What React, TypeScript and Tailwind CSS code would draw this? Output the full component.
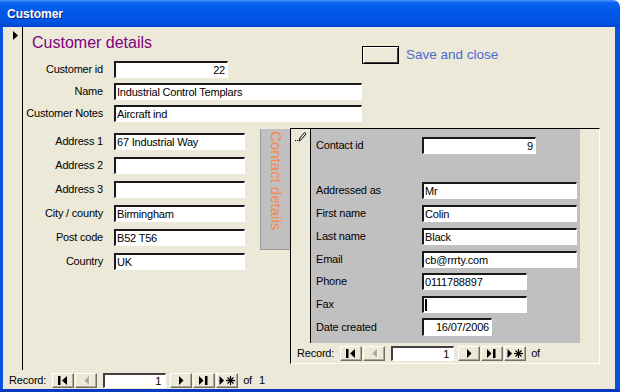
import React from 'react';

type FieldProps = {
  size: string;
  value?: string;
  right?: boolean;
  caret?: boolean;
};

const Field = ({ size, value, right, caret }: FieldProps) => (
  <div
    className={`${size} shrink-0 flex items-center overflow-hidden whitespace-nowrap bg-white border-t-2 border-l-2 border-b border-r border-t-[#1a1a1a] border-l-[#1a1a1a] border-b-white border-r-white text-[11px] leading-none tracking-[-0.2px] text-black ${right ? 'justify-end pr-[2px]' : 'pl-[1px]'}`}
  >
    {caret && <span className="w-[2px] h-[12px] bg-black" />}
    {value}
  </div>
);

const MainRow = ({ label, children }: { label: string; children: React.ReactNode }) => (
  <div className="flex items-center h-[17px]">
    <span className="w-[91px] shrink-0 pr-[11px] text-right text-[11px] tracking-[-0.2px] whitespace-nowrap">{label}</span>
    {children}
  </div>
);

const SubRow = ({ label, children, className = '' }: { label: string; children: React.ReactNode; className?: string }) => (
  <div className={`flex items-center ${className}`}>
    <span className="w-[106px] shrink-0 text-[11px] tracking-[-0.2px] whitespace-nowrap">{label}</span>
    {children}
  </div>
);

const NavButton = ({ children }: { children: React.ReactNode }) => (
  <div className="w-[22px] h-[15px] shrink-0 bg-[#ece9d8] border border-t-white border-l-white border-b-[#716f64] border-r-[#716f64] shadow-[inset_-1px_-1px_0_#aca899]">
    <svg width="20" height="13" viewBox="0 0 20 13" className="block">
      {children}
    </svg>
  </div>
);

const RecordNav = ({ total }: { total?: string }) => (
  <div className="flex items-center text-[11px] tracking-[-0.2px] text-black">
    <span>Record:</span>
    <div className="flex gap-[1px] ml-[6px]">
      <NavButton>
        <rect x="5" y="2" width="2.5" height="9" fill="#000" />
        <polygon points="14,2 14,11 9,6.5" fill="#000" />
      </NavButton>
      <NavButton>
        <polygon points="14,3 14,12 9.5,7.5" fill="#fff" />
        <polygon points="13,2 13,11 8.5,6.5" fill="#aca899" />
      </NavButton>
    </div>
    <div className="ml-[6px] w-[63px] h-[15px] bg-white border-t-2 border-l-2 border-b border-r border-t-[#404040] border-l-[#404040] border-b-white border-r-white flex items-center justify-end pr-[4px] leading-none">
      1
    </div>
    <div className="flex gap-[1px] ml-[4px]">
      <NavButton>
        <polygon points="8,2 8,11 12.5,6.5" fill="#000" />
      </NavButton>
      <NavButton>
        <polygon points="5,2 5,11 9.5,6.5" fill="#000" />
        <rect x="11" y="2" width="2.5" height="9" fill="#000" />
      </NavButton>
      <NavButton>
        <polygon points="2.5,2 2.5,11 7,6.5" fill="#000" />
        <g stroke="#000" strokeWidth="1.2">
          <line x1="13.5" y1="2" x2="13.5" y2="11" />
          <line x1="9" y1="6.5" x2="18" y2="6.5" />
          <line x1="10.5" y1="3.5" x2="16.5" y2="9.5" />
          <line x1="16.5" y1="3.5" x2="10.5" y2="9.5" />
        </g>
      </NavButton>
    </div>
    <span className="ml-[5px]">of</span>
    {total && <span className="ml-[7px]">{total}</span>}
  </div>
);

export default function App() {
  return (
    <div className="w-[620px] h-[392px] flex flex-col overflow-hidden bg-white font-['Liberation_Sans',Arial,sans-serif] text-black">
      {/* title bar */}
      <div className="h-[27px] shrink-0 rounded-tr-[7px] bg-[linear-gradient(180deg,#4a94f8_0%,#0a62f0_10%,#0058e8_45%,#0054e3_80%,#0045d0_100%)] flex items-center pl-[7px] pt-[1px]">
        <span className="text-white font-bold text-[12px] [text-shadow:1px_1px_0_#0a2a8a]">Customer</span>
      </div>

      <div className="flex-1 flex bg-[#0b52e0] pl-[3px] pr-[5px]">
        <div className="flex-1 flex flex-col bg-[#ece9d8]">
          {/* detail section */}
          <div className="h-[343px] flex">
            <div className="w-[20px] shrink-0 border-r border-black pt-[4px] pl-[10px]">
              <svg width="5" height="9" viewBox="0 0 5 9" className="block">
                <polygon points="0,0 0,9 5,4.5" fill="#000" />
              </svg>
            </div>

            <div className="flex-1 flex flex-col">
              {/* top block */}
              <div className="flex">
                <div className="w-[339px] shrink-0 flex flex-col">
                  <div className="pt-[7px] pl-[9px] mb-[9px] text-[16px] leading-[18px] text-[#800080]">Customer details</div>
                  <div className="flex flex-col gap-[5px]">
                    <MainRow label="Customer id">
                      <Field size="w-[114px] h-[17px]" value="22" right />
                    </MainRow>
                    <MainRow label="Name">
                      <Field size="w-[248px] h-[17px]" value="Industrial Control Templars" />
                    </MainRow>
                    <MainRow label="Customer Notes">
                      <Field size="w-[248px] h-[17px]" value="Aircraft ind" />
                    </MainRow>
                  </div>
                </div>
                <div className="flex items-center mt-[19px] h-[18px]">
                  <div className="w-[37px] h-[18px] bg-[#ece9d8] border border-black shadow-[inset_1px_1px_0_#fff,inset_-1px_-1px_0_#404040]" />
                  <span className="ml-[7px] text-[13.5px] text-[#4a6bd3]">Save and close</span>
                </div>
              </div>

              {/* lower block */}
              <div className="flex items-start mt-[6px]">
                <div className="w-[237px] shrink-0 pt-[5px] flex flex-col gap-[7px]">
                  <MainRow label="Address 1">
                    <Field size="w-[131px] h-[17px]" value="67 Industrial Way" />
                  </MainRow>
                  <MainRow label="Address 2">
                    <Field size="w-[131px] h-[17px]" />
                  </MainRow>
                  <MainRow label="Address 3">
                    <Field size="w-[131px] h-[17px]" />
                  </MainRow>
                  <MainRow label="City / county">
                    <Field size="w-[131px] h-[17px]" value="Birmingham" />
                  </MainRow>
                  <MainRow label="Post code">
                    <Field size="w-[131px] h-[17px]" value="B52 T56" />
                  </MainRow>
                  <MainRow label="Country">
                    <Field size="w-[131px] h-[17px]" value="UK" />
                  </MainRow>
                </div>

                {/* contact details tab */}
                <div className="w-[30px] h-[121px] mt-[1px] shrink-0 bg-[#c0c0c0] border-l border-b border-[#9a9a9a] flex justify-center pt-[2px]">
                  <span className="[writing-mode:vertical-rl] text-[15px] leading-[18px] text-[#f5884a]">Contact details</span>
                </div>

                {/* subform */}
                <div className="w-[310px] h-[236px] shrink-0 flex flex-col border border-t-black border-l-black border-b-white border-r-white">
                  <div className="h-[214px] flex">
                    <div className="w-[20px] shrink-0 border-r border-black pt-[2px] pl-[3px]">
                      <svg width="13" height="12" viewBox="0 0 13 12" className="block">
                        <rect x="1" y="9" width="1" height="1" fill="#000" />
                        <rect x="3" y="9" width="1" height="1" fill="#000" />
                        <path d="M5 10 L6 7 L10.5 1.5 L12 2.8 L7.5 8.3 Z" fill="#fff" stroke="#000" strokeWidth="1" />
                      </svg>
                    </div>
                    <div className="w-[269px] shrink-0 bg-[#c0c0c0] pt-[8px] pl-[5px] flex flex-col">
                      <SubRow label="Contact id" className="h-[17px]">
                        <Field size="w-[114px] h-[17px]" value="9" right />
                      </SubRow>
                      <div className="mt-[28px] flex flex-col gap-[6px]">
                        <SubRow label="Addressed as">
                          <Field size="w-[155px] h-[17px]" value="Mr" />
                        </SubRow>
                        <SubRow label="First name">
                          <Field size="w-[155px] h-[17px]" value="Colin" />
                        </SubRow>
                        <SubRow label="Last name">
                          <Field size="w-[155px] h-[17px]" value="Black" />
                        </SubRow>
                        <SubRow label="Email">
                          <Field size="w-[155px] h-[17px]" value="cb@rrrty.com" />
                        </SubRow>
                      </div>
                      <SubRow label="Phone" className="mt-[5px]">
                        <Field size="w-[105px] h-[17px]" value="0111788897" />
                      </SubRow>
                      <SubRow label="Fax" className="mt-[6px]">
                        <Field size="w-[105px] h-[17px]" caret />
                      </SubRow>
                      <SubRow label="Date created" className="mt-[5px]">
                        <Field size="w-[70px] h-[18px]" value="16/07/2006" right />
                      </SubRow>
                    </div>
                    <div className="flex-1" />
                  </div>
                  <div className="h-[20px] flex items-center pl-[6px] pt-[1px]">
                    <RecordNav />
                  </div>
                </div>
              </div>
            </div>
          </div>

          {/* main navigation */}
          <div className="h-[19px] flex items-center pl-[6px] pt-[2px]">
            <RecordNav total="1" />
          </div>
        </div>
      </div>
      <div className="h-[3px] shrink-0 bg-[#0838c0]" />
    </div>
  );
}
